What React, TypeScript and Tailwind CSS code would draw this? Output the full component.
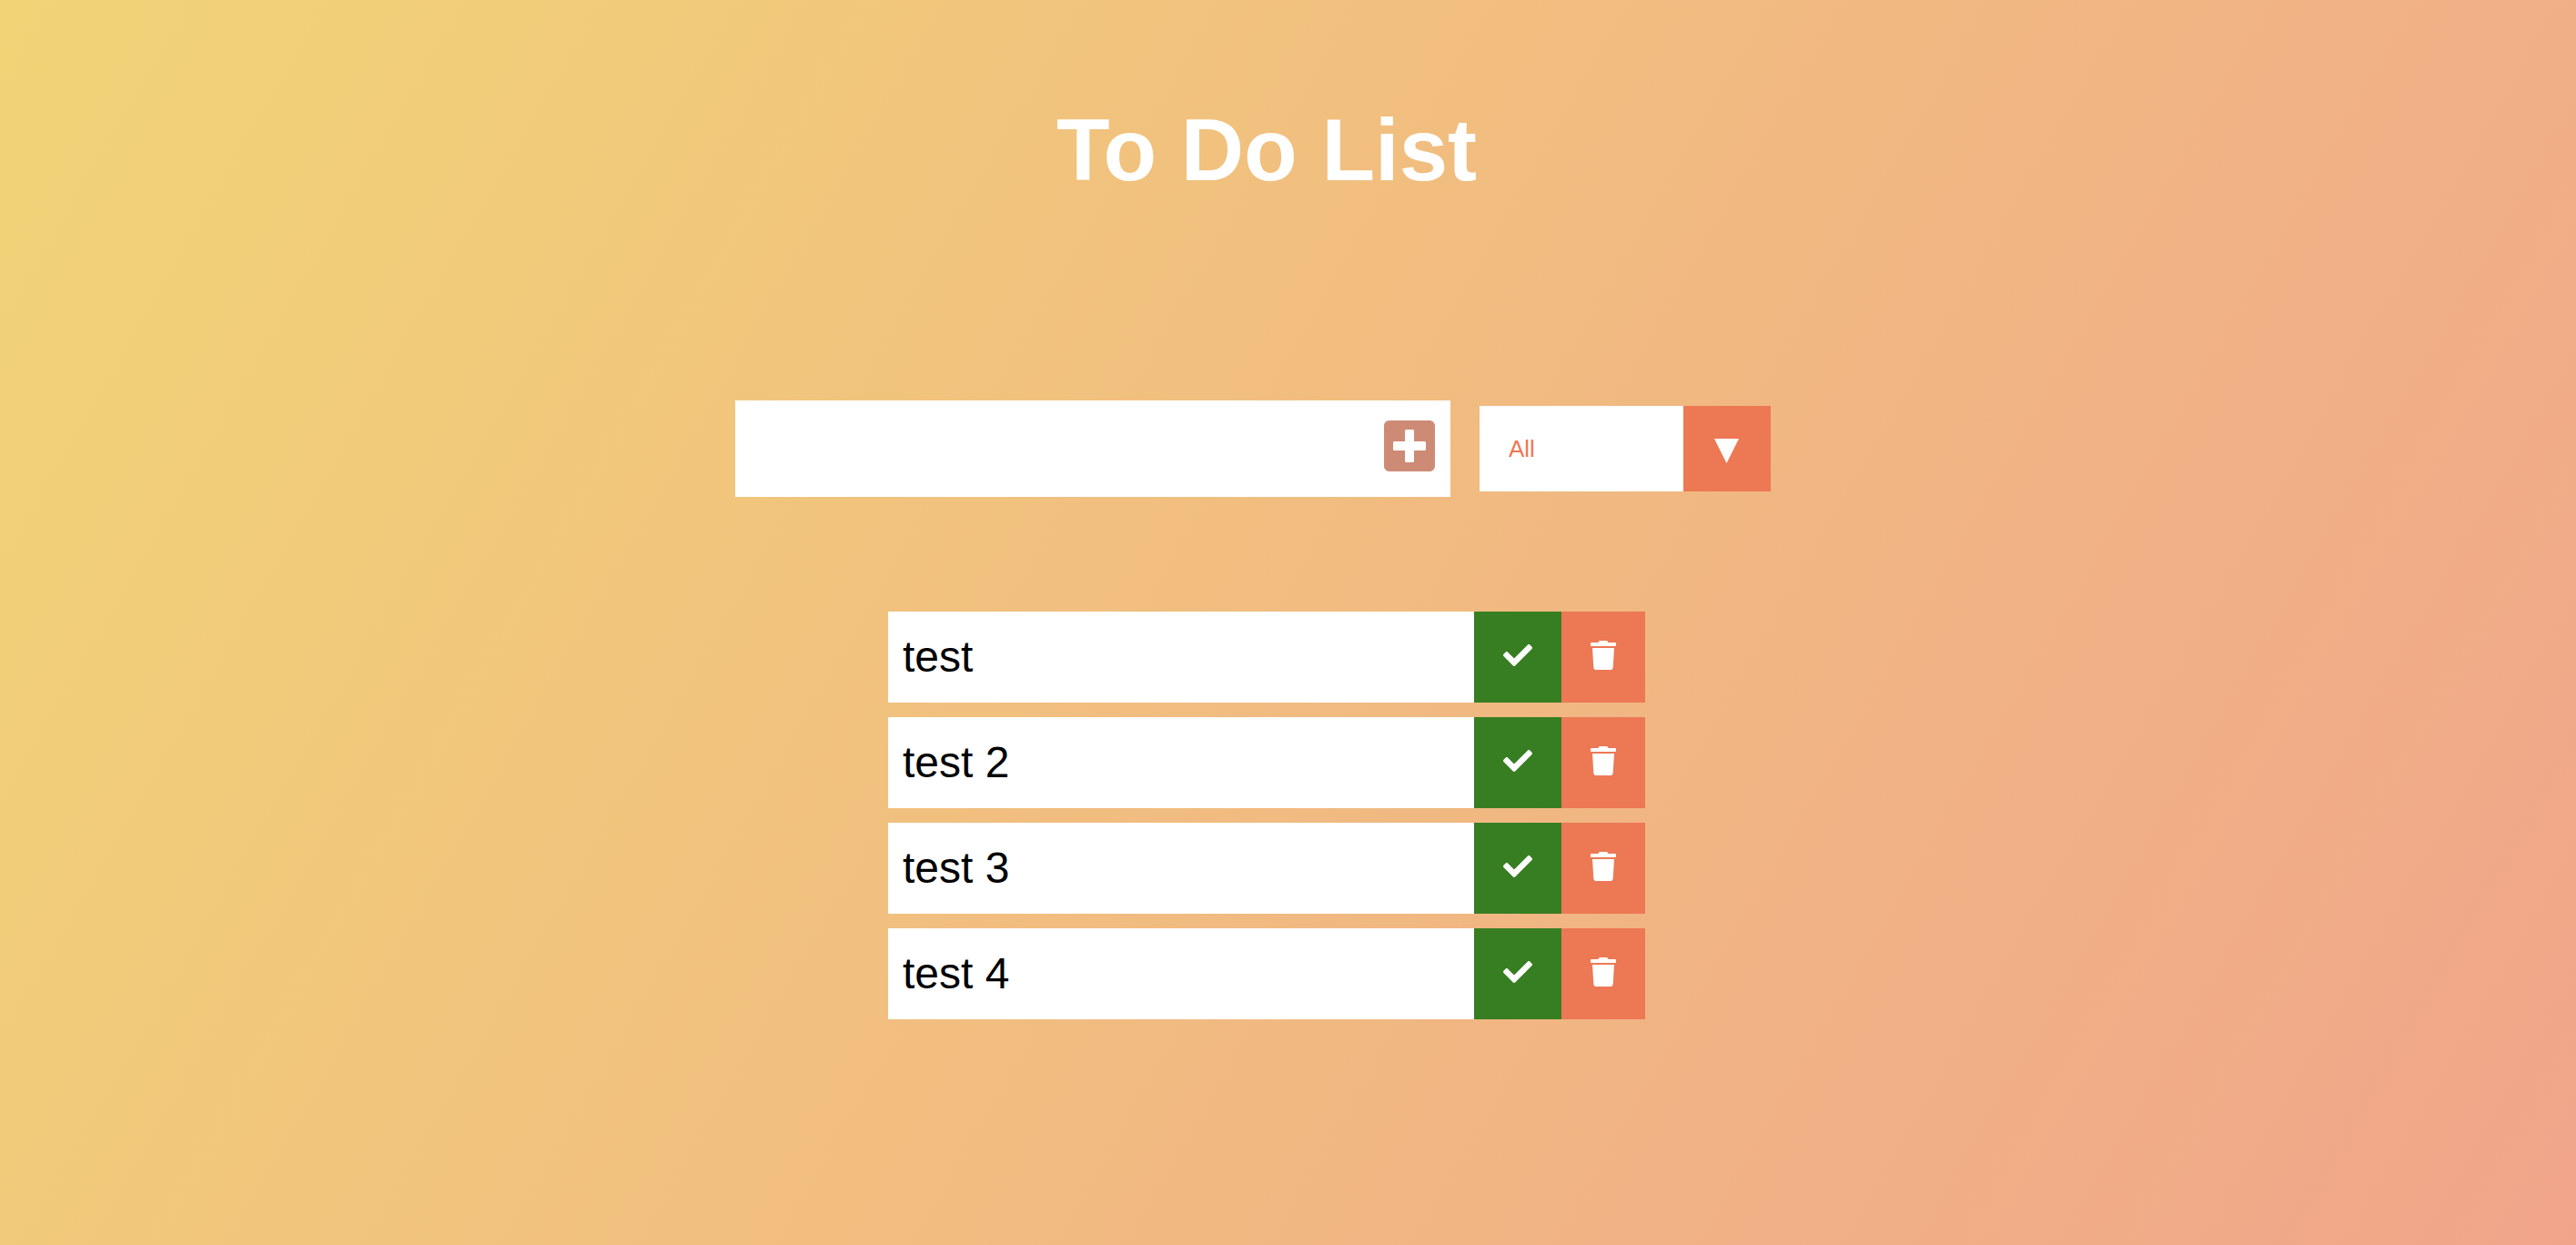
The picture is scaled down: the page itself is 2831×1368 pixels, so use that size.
import { useState } from "react";
import type { FormEvent } from "react";
import { FaCheck, FaPlusSquare, FaTrash } from "react-icons/fa";

type Todo = { id: number; text: string; done: boolean };

const initialTodos: Todo[] = [
  { id: 1, text: "test", done: false },
  { id: 2, text: "test 2", done: false },
  { id: 3, text: "test 3", done: false },
  { id: 4, text: "test 4", done: false },
];

type TodoItemProps = {
  todo: Todo;
  onToggle: () => void;
  onDelete: () => void;
};

function TodoItem({ todo, onToggle, onDelete }: TodoItemProps) {
  return (
    <li className="flex h-[100px] bg-white">
      <span
        className={
          todo.done
            ? "flex flex-1 items-center px-4 text-5xl text-black line-through opacity-50"
            : "flex flex-1 items-center px-4 text-5xl text-black"
        }
      >
        {todo.text}
      </span>
      <button
        type="button"
        aria-label={"Complete " + todo.text}
        onClick={onToggle}
        className="flex items-start bg-[#377e22] p-8 text-white"
      >
        <FaCheck className="size-8" />
      </button>
      <button
        type="button"
        aria-label={"Delete " + todo.text}
        onClick={onDelete}
        className="flex items-start bg-[#ed7854] p-8 text-white"
      >
        <FaTrash className="h-8 w-7" />
      </button>
    </li>
  );
}

export default function App() {
  const [todos, setTodos] = useState<Todo[]>(initialTodos);
  const [text, setText] = useState("");
  const [filter, setFilter] = useState("all");

  const addTodo = (event: FormEvent) => {
    event.preventDefault();
    if (text.trim() === "") return;
    setTodos([...todos, { id: Date.now(), text, done: false }]);
    setText("");
  };

  const visible = todos.filter(
    (todo) => filter === "all" || (filter === "completed") === todo.done
  );

  return (
    <div className="min-h-screen bg-[linear-gradient(120deg,#f1d476_0%,#f1bc80_50%,#f0a58a_100%)] pr-[47px] font-['Liberation_Sans',Arial,sans-serif]">
      <header className="flex h-[330px] items-center justify-center">
        <h1 className="text-8xl font-bold text-white">To Do List</h1>
      </header>

      <form
        onSubmit={addTodo}
        className="flex h-[326px] items-center justify-center gap-8 pr-[30px]"
      >
        <div className="flex h-[106px] w-[786px] bg-white">
          <input
            type="text"
            aria-label="New to do"
            value={text}
            onChange={(event) => setText(event.target.value)}
            className="min-w-0 flex-1 px-4 text-5xl text-black outline-none"
          />
          <button
            type="submit"
            aria-label="Add to do"
            className="flex items-start px-[17px] pt-[18px] text-[#cd8b76]"
          >
            <FaPlusSquare className="h-16 w-14" />
          </button>
        </div>

        <div className="relative h-[94px] w-80">
          <select
            aria-label="Filter to dos"
            value={filter}
            onChange={(event) => setFilter(event.target.value)}
            className="size-full appearance-none bg-white pr-24 pl-8 text-[26px] text-[#ed7854] outline-none"
          >
            <option value="all">All</option>
            <option value="completed">Completed</option>
            <option value="uncompleted">Uncompleted</option>
          </select>
          <div className="pointer-events-none absolute inset-y-0 right-0 flex w-24 items-center justify-center bg-[#ed7854] pt-1 pr-px">
            <svg viewBox="0 0 27 27" className="size-[27px] fill-white" aria-hidden="true">
              <path d="M0 0H27L13.5 27Z" />
            </svg>
          </div>
        </div>
      </form>

      <ul className="mx-auto flex w-[832px] flex-col gap-4 pt-4">
        {visible.map((todo) => (
          <TodoItem
            key={todo.id}
            todo={todo}
            onToggle={() =>
              setTodos(todos.map((t) => (t.id === todo.id ? { ...t, done: !t.done } : t)))
            }
            onDelete={() => setTodos(todos.filter((t) => t.id !== todo.id))}
          />
        ))}
      </ul>
    </div>
  );
}
